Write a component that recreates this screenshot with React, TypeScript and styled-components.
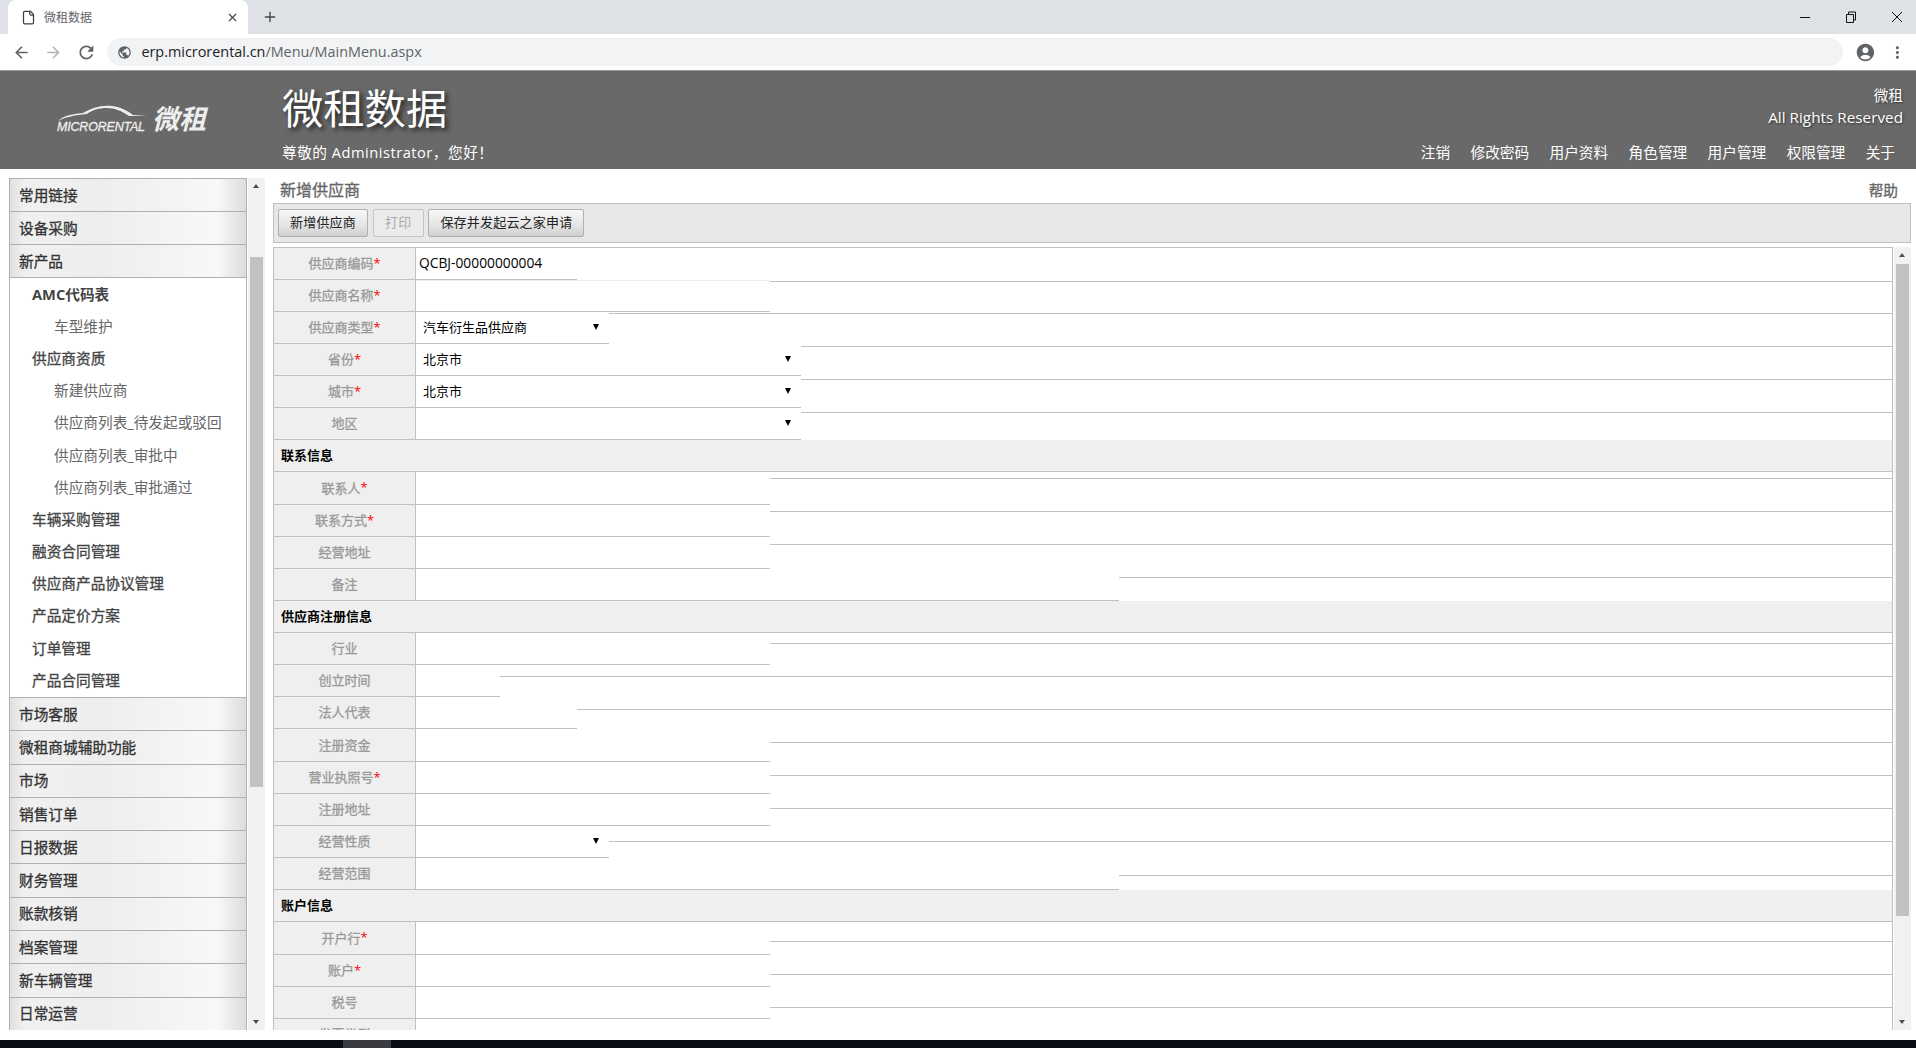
import React from 'react';
import styled, { createGlobalStyle } from 'styled-components';
import { LuFile, LuPlus, LuX } from 'react-icons/lu';
import {
  MdAccountCircle,
  MdArrowBack,
  MdArrowForward,
  MdMoreVert,
  MdPublic,
  MdRefresh,
} from 'react-icons/md';

const FONT = '"Open Sans", "Noto Sans CJK SC", sans-serif';

const GlobalStyle = createGlobalStyle`
  html, body {
    margin: 0;
    padding: 0;
    height: 100%;
    overflow: hidden;
    background: #fff;
    font-family: ${FONT};
  }
  * { box-sizing: border-box; }
`;

interface FieldRow {
  label: string;
  required?: boolean;
  width: number;
  tail: number;
  value?: string;
  select?: boolean;
  height?: number;
  faint?: boolean;
}

interface SectionRow {
  section: string;
  tail: number;
}

// tail: where the row's own rule lands, it drifts below the row as the form goes down
const rows: (FieldRow | SectionRow)[] = [
  { label: '供应商编码', required: true, width: 161, tail: 34, value: 'QCBJ-00000000004' },
  { label: '供应商名称', required: true, width: 354, tail: 34, faint: true },
  { label: '供应商类型', required: true, width: 193, tail: 35, value: '汽车衍生品供应商', select: true },
  { label: '省份', required: true, width: 385, tail: 36, value: '北京市', select: true },
  { label: '城市', required: true, width: 385, tail: 37, value: '北京市', select: true },
  { label: '地区', width: 385, tail: 38, select: true },
  { section: '联系信息', tail: 38 },
  { label: '联系人', required: true, width: 354, tail: 40, height: 33 },
  { label: '联系方式', required: true, width: 354, tail: 40 },
  { label: '经营地址', width: 354, tail: 41 },
  { label: '备注', width: 703, tail: 42 },
  { section: '供应商注册信息', tail: 42 },
  { label: '行业', width: 354, tail: 44 },
  { label: '创立时间', width: 84, tail: 45 },
  { label: '法人代表', width: 161, tail: 46 },
  { label: '注册资金', width: 354, tail: 47, height: 33 },
  { label: '营业执照号', required: true, width: 354, tail: 47 },
  { label: '注册地址', width: 354, tail: 48 },
  { label: '经营性质', width: 193, tail: 50, select: true },
  { label: '经营范围', width: 703, tail: 51 },
  { section: '账户信息', tail: 51 },
  { label: '开户行', required: true, width: 354, tail: 53, height: 33 },
  { label: '账户', required: true, width: 354, tail: 53 },
  { label: '税号', width: 354, tail: 54 },
  { label: '发票类型', width: 354, tail: 54 },
];

const topMenus = ['常用链接', '设备采购', '新产品'];
const bottomMenus = ['市场客服', '微租商城辅助功能', '市场', '销售订单', '日报数据', '财务管理', '账款核销', '档案管理', '新车辆管理', '日常运营'];
const subMenus: { text: string; child?: boolean; strong?: boolean }[] = [
  { text: 'AMC代码表', strong: true },
  { text: '车型维护', child: true },
  { text: '供应商资质' },
  { text: '新建供应商', child: true },
  { text: '供应商列表_待发起或驳回', child: true },
  { text: '供应商列表_审批中', child: true },
  { text: '供应商列表_审批通过', child: true },
  { text: '车辆采购管理' },
  { text: '融资合同管理' },
  { text: '供应商产品协议管理' },
  { text: '产品定价方案' },
  { text: '订单管理' },
  { text: '产品合同管理' },
];
const navLinks = ['注销', '修改密码', '用户资料', '角色管理', '用户管理', '权限管理', '关于'];

const App: React.FC = () => (
  <>
    <GlobalStyle />
    <Page>
      <TabStrip>
        <Tab>
          <LuFile size={15} color="#3c4043" />
          <TabTitle>微租数据</TabTitle>
          <LuX size={13} color="#444" />
        </Tab>
        <NewTab>
          <LuPlus size={16} color="#444" />
        </NewTab>
        <WindowControls>
          <svg width="12" height="12" viewBox="0 0 12 12">
            <path d="M1 6.5h10" stroke="#111" fill="none" />
          </svg>
          <svg width="12" height="12" viewBox="0 0 12 12">
            <path d="M1.5 3.5h7v8h-7zM3.5 3.5v-2.5h7v8h-2" stroke="#111" fill="none" />
          </svg>
          <svg width="12" height="12" viewBox="0 0 12 12">
            <path d="M1 1l10 10M11 1L1 11" stroke="#111" fill="none" />
          </svg>
        </WindowControls>
      </TabStrip>
      <AddressRow>
        <MdArrowBack size={19} color="#5f6368" />
        <MdArrowForward size={19} color="#b4b7ba" />
        <MdRefresh size={21} color="#5f6368" />
        <Omnibox>
          <MdPublic size={15} color="#5f6368" />
          <Url>
            erp.microrental.cn<UrlPath>/Menu/MainMenu.aspx</UrlPath>
          </Url>
        </Omnibox>
        <MdAccountCircle size={21} color="#5f6368" />
        <MdMoreVert size={19} color="#5f6368" />
      </AddressRow>
      <Banner>
        <Logo>
          <LogoMark>
            <svg width="92" height="17" viewBox="0 0 92 17" fill="none">
              <path
                d="M1 16C6 11 14 9 26 8C35 3 43 0 55 1C64 2 71 6 76 10L90 11L72 11C65 6 58 3 50 3C42 3 35 5 30 9C18 10 9 12 1 16Z"
                fill="#eee"
              />
            </svg>
            <LogoWord>MICRORENTAL</LogoWord>
          </LogoMark>
          <LogoHan>微租</LogoHan>
        </Logo>
        <BannerMain>
          <BannerTitle>微租数据</BannerTitle>
          <Greeting>尊敬的 Administrator，您好！</Greeting>
        </BannerMain>
        <BannerSide>
          <Owner>微租</Owner>
          <Rights>All Rights Reserved</Rights>
          <NavLinks>
            {navLinks.map((link) => (
              <NavLink key={link}>{link}</NavLink>
            ))}
          </NavLinks>
        </BannerSide>
      </Banner>
      <Body>
        <SideColumn>
          <Menu>
            {topMenus.map((m) => (
              <MenuHeader key={m} $height={33}>
                {m}
              </MenuHeader>
            ))}
            <SubList>
              {subMenus.map((s) => (
                <SubItem key={s.text} $child={s.child} $strong={s.strong}>
                  {s.text}
                </SubItem>
              ))}
            </SubList>
            {bottomMenus.map((m) => (
              <MenuHeader key={m} $height={33.3}>
                {m}
              </MenuHeader>
            ))}
          </Menu>
          <Scrollbar>
            <ArrowUp />
            <Thumb $top={79} $height={530} />
            <ArrowDown />
          </Scrollbar>
        </SideColumn>
        <Main>
          <TitleRow>
            <PageTitle>新增供应商</PageTitle>
            <Help>帮助</Help>
          </TitleRow>
          <Toolbar>
            <ActionButton>新增供应商</ActionButton>
            <ActionButton disabled>打印</ActionButton>
            <ActionButton>保存并发起云之家申请</ActionButton>
          </Toolbar>
          <FormArea>
            <FormTable>
              {rows.map((row) =>
                'section' in row ? (
                  <SectionTitle key={row.section} $tail={row.tail}>
                    {row.section}
                  </SectionTitle>
                ) : (
                  <Row key={row.label} $height={row.height ?? 32}>
                    <Label>
                      {row.label}
                      {row.required && <Star>*</Star>}
                    </Label>
                    <Field $width={row.width} $faint={row.faint} $select={row.select}>
                      {row.value}
                      {row.select && <Caret />}
                    </Field>
                    <Tail $height={row.tail} $under={row.width} />
                  </Row>
                ),
              )}
            </FormTable>
            <Scrollbar>
              <ArrowUp />
              <Thumb $top={17} $height={652} />
              <ArrowDown />
            </Scrollbar>
          </FormArea>
        </Main>
      </Body>
      <Taskbar>
        <TaskItem />
        <Clock>11:33</Clock>
      </Taskbar>
    </Page>
  </>
);

const Page = styled.div`
  width: 1916px;
  height: 1048px;
  display: flex;
  flex-direction: column;
  overflow: hidden;
  background: #fff;
`;

const TabStrip = styled.div`
  height: 34px;
  flex: none;
  background: #dee1e6;
  display: flex;
  align-items: flex-end;
  padding-left: 8px;
`;

const Tab = styled.div`
  width: 240px;
  height: 34px;
  background: #fff;
  border-radius: 8px 8px 0 0;
  display: flex;
  align-items: center;
  padding: 0 9px 0 13px;
`;

const TabTitle = styled.span`
  flex: 1;
  margin-left: 8px;
  font-size: 12px;
  color: #5f6368;
`;

const NewTab = styled.div`
  height: 34px;
  margin-left: 14px;
  display: flex;
  align-items: center;
`;

const WindowControls = styled.div`
  margin-left: auto;
  height: 34px;
  display: flex;
  align-items: center;
  gap: 34px;
  padding-right: 13px;
`;

const AddressRow = styled.div`
  height: 36px;
  flex: none;
  background: #fff;
  display: flex;
  align-items: center;
  padding: 0 9px 0 12px;
  gap: 13px;
  > svg:nth-child(5),
  > svg:nth-child(6) {
    margin-left: -1px;
  }
`;

const Omnibox = styled.div`
  width: 1736px;
  height: 28px;
  flex: none;
  margin-left: -2px;
  background: #f1f3f4;
  border-radius: 14px;
  display: flex;
  align-items: center;
  padding-left: 10px;
`;

const Url = styled.span`
  margin-left: 9px;
  padding-bottom: 1px;
  font-size: 14.4px;
  color: #202124;
`;

const UrlPath = styled.span`
  color: #5f6368;
`;

const Banner = styled.div`
  height: 99px;
  flex: none;
  background: #696969;
  border-top: 1px solid #9a9a9a;
  display: flex;
  color: #fff;
`;

const Logo = styled.div`
  width: 282px;
  display: flex;
  align-items: flex-start;
  padding: 31px 0 0 57px;
`;

const LogoMark = styled.div`
  width: 92px;
  display: flex;
  flex-direction: column;
  svg {
    display: block;
    margin-top: 3px;
  }
`;

const LogoWord = styled.span`
  font-family: "Liberation Sans", sans-serif;
  font-size: 12.5px;
  line-height: 11px;
  font-style: italic;
  letter-spacing: -0.2px;
  color: #eee;
  white-space: nowrap;
  -webkit-text-stroke: 0.3px #eee;
`;

const LogoHan = styled.span`
  margin: 0 0 0 3px;
  font-size: 27px;
  line-height: 34px;
  font-weight: 700;
  font-style: italic;
  color: #eee;
`;

const BannerMain = styled.div`
  flex: 1;
  padding-top: 12px;
`;

const BannerTitle = styled.div`
  font-size: 41.3px;
  line-height: 50px;
  text-shadow: 3px 3px 5px #222;
  margin-bottom: 9px;
`;

const Greeting = styled.div`
  font-size: 14.67px;
  line-height: 20px;
  letter-spacing: 0.5px;
`;

const BannerSide = styled.div`
  display: flex;
  flex-direction: column;
  align-items: flex-end;
  padding: 13px 13px 0 0;
`;

const Owner = styled.div`
  font-size: 14.67px;
  line-height: 22px;
  text-shadow: 1px 1px 2px #333;
`;

const Rights = styled.div`
  font-size: 15.3px;
  line-height: 23px;
  text-shadow: 1px 1px 2px #333;
`;

const NavLinks = styled.div`
  display: flex;
  gap: 20.4px;
  margin-top: 13px;
  padding-right: 8px;
`;

const NavLink = styled.span`
  font-size: 14.67px;
  line-height: 20px;
`;

const Body = styled.div`
  flex: 1;
  min-height: 0;
  display: flex;
  padding: 9px 5px 10px 9px;
`;

const SideColumn = styled.div`
  width: 256px;
  flex: none;
  display: flex;
`;

const Menu = styled.div`
  width: 238px;
  flex: none;
  border: 1px solid #b0b0b0;
  border-bottom: none;
  overflow: hidden;
`;

const MenuHeader = styled.div<{ $height: number }>`
  height: ${({ $height }) => $height}px;
  padding: 0 0 2px 9px;
  display: flex;
  align-items: center;
  font-size: 14.67px;
  color: #333;
  -webkit-text-stroke: 0.3px #333;
  background: linear-gradient(to right, #e0e0e0 0, #f0f0f0 6%, #eeeeee 40%, #f8f8f8 88%, #dcdcdc 100%);
  border-bottom: 1px solid #b0b0b0;
`;

const SubList = styled.div`
  height: 420px;
  background: #fff;
  border-bottom: 1px solid #b0b0b0;
  display: flex;
  flex-direction: column;
`;

const SubItem = styled.div<{ $child?: boolean; $strong?: boolean }>`
  height: 32.2px;
  flex: none;
  display: flex;
  align-items: center;
  padding: 0 0 2px ${({ $child }) => ($child ? '44px' : '22px')};
  font-size: 14.67px;
  font-weight: ${({ $strong }) => ($strong ? 700 : 400)};
  color: ${({ $child }) => ($child ? '#666' : '#444')};
  -webkit-text-stroke: ${({ $child, $strong }) => ($child || $strong ? '0' : '0.3px #444')};
`;

const Scrollbar = styled.div`
  width: 17px;
  flex: none;
  height: 100%;
  margin-left: 1px;
  background: #f1f1f1;
  position: relative;
`;

const Thumb = styled.div<{ $top: number; $height: number }>`
  position: absolute;
  left: 2px;
  right: 2px;
  top: ${({ $top }) => $top}px;
  height: ${({ $height }) => $height}px;
  background: #c1c1c1;
`;

const ArrowUp = styled.i`
  position: absolute;
  left: 5px;
  top: 6px;
  border-left: 3.5px solid transparent;
  border-right: 3.5px solid transparent;
  border-bottom: 4px solid #505050;
`;

const ArrowDown = styled.i`
  position: absolute;
  left: 5px;
  bottom: 6px;
  border-left: 3.5px solid transparent;
  border-right: 3.5px solid transparent;
  border-top: 4px solid #505050;
`;

const Main = styled.div`
  flex: 1;
  min-width: 0;
  margin-left: 8px;
  display: flex;
  flex-direction: column;
`;

const TitleRow = styled.div`
  height: 25px;
  flex: none;
  display: flex;
  align-items: center;
  justify-content: space-between;
  padding: 0 13px 3px 7px;
`;

const PageTitle = styled.div`
  font-size: 16px;
  color: #666;
  -webkit-text-stroke: 0.3px #666;
`;

const Help = styled.div`
  font-size: 14.67px;
  color: #666;
  -webkit-text-stroke: 0.3px #666;
`;

const Toolbar = styled.div`
  height: 40px;
  flex: none;
  background: #e7e7e7;
  border: 1px solid #c0c0c0;
  display: flex;
  align-items: center;
  gap: 4.5px;
  padding: 0 4px;
`;

const ActionButton = styled.button`
  height: 28px;
  padding: 0 ${({ disabled }) => (disabled ? '11.5px' : '11px')} 3px;
  font-family: ${FONT};
  font-size: 13px;
  letter-spacing: 0.2px;
  color: ${({ disabled }) => (disabled ? '#aaa' : '#222')};
  background: ${({ disabled }) =>
    disabled ? '#ebebeb' : 'linear-gradient(#f7f7f7, #e4e4e4 60%, #cfcfcf)'};
  border: 1px solid ${({ disabled }) => (disabled ? '#c4c4c4' : '#b0b0b0')};
  border-radius: 2px;
`;

const FormArea = styled.div`
  flex: 1;
  min-height: 0;
  margin-top: 4px;
  display: flex;
`;

const FormTable = styled.div`
  width: 1620px;
  flex: none;
  height: 100%;
  overflow: hidden;
  border: 1px solid #c0c0c0;
  border-bottom: none;
`;

const Row = styled.div<{ $height: number }>`
  height: ${({ $height }) => $height}px;
  display: flex;
  align-items: flex-start;
`;

const Label = styled.div`
  width: 142px;
  height: 100%;
  flex: none;
  display: flex;
  align-items: center;
  justify-content: center;
  padding-bottom: 2px;
  font-size: 13px;
  color: #999;
  -webkit-text-stroke: 0.3px #999;
  background: #efefef;
  border-right: 1px solid #c0c0c0;
  border-bottom: 1px solid #c0c0c0;
`;

const Star = styled.span`
  color: #f00;
  -webkit-text-stroke: 0;
`;

const Field = styled.div<{ $width: number; $faint?: boolean; $select?: boolean }>`
  width: ${({ $width }) => $width}px;
  height: 100%;
  flex: none;
  position: relative;
  display: flex;
  align-items: center;
  padding: 0 0 2px ${({ $select }) => ($select ? 7 : 3)}px;
  font-size: ${({ $select }) => ($select ? 13 : 13.8)}px;
  color: #000;
  background: #fff;
  border-bottom: 1px solid #c0c0c0;
  ${({ $faint }) => $faint && 'border-top: 1px solid #eee;'}
`;

const Caret = styled.i`
  position: absolute;
  right: 10px;
  top: 12px;
  width: 0;
  height: 0;
  border-left: 3.5px solid transparent;
  border-right: 3.5px solid transparent;
  border-top: 6px solid #000;
`;

const Tail = styled.div<{ $height: number; $under: number }>`
  flex: 1;
  margin-left: -${({ $under }) => $under}px;
  height: ${({ $height }) => $height}px;
  border-bottom: 1px solid #c0c0c0;
`;

const SectionTitle = styled.div<{ $tail: number }>`
  height: 32px;
  position: relative;
  display: flex;
  align-items: center;
  padding: 0 0 2px 7px;
  font-size: 13px;
  font-weight: 700;
  color: #000;
  background: #efefef;
  border-bottom: 1px solid #c0c0c0;
  &::after {
    content: '';
    position: absolute;
    left: 142px;
    right: 0;
    top: ${({ $tail }) => $tail}px;
    height: 1px;
    background: #c0c0c0;
  }
`;

const Taskbar = styled.div`
  height: 8px;
  flex: none;
  background: #0a0d14;
  display: flex;
  padding-left: 343px;
  overflow: hidden;
`;

const TaskItem = styled.div`
  width: 48px;
  height: 8px;
  background: #3a3b40;
`;

const Clock = styled.span`
  margin-left: 1424px;
  margin-top: 5px;
  font-size: 13px;
  line-height: 16px;
  color: #fff;
`;

export default App;
